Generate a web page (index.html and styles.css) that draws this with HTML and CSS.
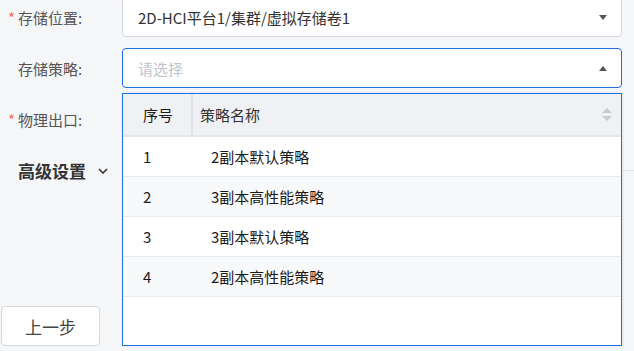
FILE: index.html
```html
<!DOCTYPE html>
<html lang="zh-CN">
<head>
  <meta charset="UTF-8">
  <meta name="viewport" content="width=device-width, initial-scale=1.0">
  <title>存储配置</title>
  <link rel="stylesheet" href="styles.css">
</head>
<body>
  <div class="page">
    <!-- 存储位置 -->
    <div class="form-row">
      <label class="form-label"><span class="req">*</span>存储位置:</label>
      <div class="select">
        <span class="select-value">2D-HCI平台1/集群/虚拟存储卷1</span>
        <span class="caret caret-down"></span>
      </div>
    </div>

    <!-- 存储策略 -->
    <div class="form-row">
      <label class="form-label"><span class="req"></span>存储策略:</label>
      <div class="select select-open">
        <span class="select-placeholder">请选择</span>
        <span class="caret caret-up"></span>
      </div>
    </div>

    <!-- 物理出口 -->
    <div class="form-row">
      <label class="form-label"><span class="req">*</span>物理出口:</label>
      <div></div>
    </div>

    <!-- 高级设置 -->
    <div class="advanced">
      <span class="advanced-title">高级设置</span>
      <svg class="chevron" width="10" height="6" viewBox="0 0 10 6">
        <path d="M1 1 L5 5 L9 1" fill="none" stroke="#333" stroke-width="1.6"/>
      </svg>
      <span class="advanced-line"></span>
    </div>

    <button class="btn">上一步</button>

    <!-- 存储策略下拉表格 -->
    <div class="dropdown">
      <div class="table-head">
        <div class="col-no">序号</div>
        <div class="col-name">
          策略名称
          <span class="sort">
            <span class="sort-up"></span>
            <span class="sort-down"></span>
          </span>
        </div>
      </div>
      <div class="table-row">
        <div class="col-no">1</div>
        <div class="col-name">2副本默认策略</div>
      </div>
      <div class="table-row row-alt">
        <div class="col-no">2</div>
        <div class="col-name">3副本高性能策略</div>
      </div>
      <div class="table-row">
        <div class="col-no">3</div>
        <div class="col-name">3副本默认策略</div>
      </div>
      <div class="table-row row-alt">
        <div class="col-no">4</div>
        <div class="col-name">2副本高性能策略</div>
      </div>
    </div>
  </div>
</body>
</html>
```

FILE: styles.css
```css
/* Page base */
body {
    margin: 0;
    background-color: #f5f6f8;
    font-family: "Noto Sans CJK SC", "Noto Sans", sans-serif;
    font-size: 15px;
    color: #333;
    overflow: hidden;
}

.page {
    position: relative;
    margin-top: -3px;
    height: 354px;
}

/* Form rows */
.form-row {
    display: grid;
    grid-template-columns: 122px 500px;
    align-items: center;
    height: 40px;
    margin-bottom: 11px;
}

.form-label {
    display: flex;
    align-items: center;
    padding-left: 8px;
    color: #555;
}

.req {
    display: inline-block;
    width: 10px;
    color: #f56c6c;
}

/* Select boxes */
.select {
    display: flex;
    align-items: center;
    justify-content: space-between;
    box-sizing: border-box;
    height: 40px;
    padding: 0 14px 0 15px;
    background-color: #fff;
    border: 1px solid #d3d6dc;
    border-radius: 4px;
}

.select-open {
    border-color: #1f6fe5;
}

.select-value {
    color: #333;
}

.select-placeholder {
    color: #c0c4cc;
}

.caret {
    width: 0;
    height: 0;
    border-left: 4px solid transparent;
    border-right: 4px solid transparent;
}

.caret-down {
    border-top: 5px solid #555;
}

.caret-up {
    border-bottom: 5px solid #555;
}

/* Advanced settings header */
.advanced {
    display: flex;
    align-items: center;
    height: 40px;
    margin-top: 7px;
    padding-left: 18px;
}

.advanced-title {
    font-size: 17px;
    font-weight: bold;
    color: #333;
}

.chevron {
    margin-left: 12px;
    margin-top: 1px;
}

.advanced-line {
    flex: 1;
    height: 1px;
    margin-left: 14px;
    background-color: #e3e5ea;
}

/* Back button */
.btn {
    display: block;
    width: 99px;
    height: 40px;
    margin: 116px 0 0 1px;
    background-color: #fff;
    border: 1px solid #d5d8de;
    border-radius: 4px;
    font-family: inherit;
    font-size: 17px;
    color: #444;
}

/* Dropdown table */
.dropdown {
    position: absolute;
    top: 96px;
    left: 122px;
    width: 500px;
    height: 253px;
    box-sizing: border-box;
    background-color: #fff;
    border: 1px solid #1f6fe5;
    box-shadow: 1px 0 2px rgba(0, 0, 0, 0.08);
}

.table-head,
.table-row {
    display: flex;
    align-items: center;
}

.table-head {
    height: 41px;
    background-color: #f0f1f5;
    border-bottom: 2px solid #e4e6ec;
}

.table-row {
    height: 39px;
    border-bottom: 1px solid #e9eaef;
}

.row-alt {
    background-color: #f8f9fb;
}

.col-no {
    width: 70px;
    box-sizing: border-box;
    padding-left: 20px;
    color: #1a1a1a;
}

.col-name {
    flex: 1;
    padding-left: 18px;
    color: #1a1a1a;
}

.table-head .col-no {
    height: 100%;
    display: flex;
    align-items: center;
    border-right: 2px solid #dfe1e7;
}

.table-head .col-name {
    display: flex;
    align-items: center;
    justify-content: space-between;
    padding-left: 7px;
    padding-right: 9px;
    color: #333;
}

/* Sort arrows */
.sort {
    display: flex;
    flex-direction: column;
    gap: 3px;
}

.sort-up,
.sort-down {
    width: 0;
    height: 0;
    border-left: 5px solid transparent;
    border-right: 5px solid transparent;
}

.sort-up {
    border-bottom: 5px solid #c8cbd1;
}

.sort-down {
    border-top: 5px solid #c8cbd1;
}
```
